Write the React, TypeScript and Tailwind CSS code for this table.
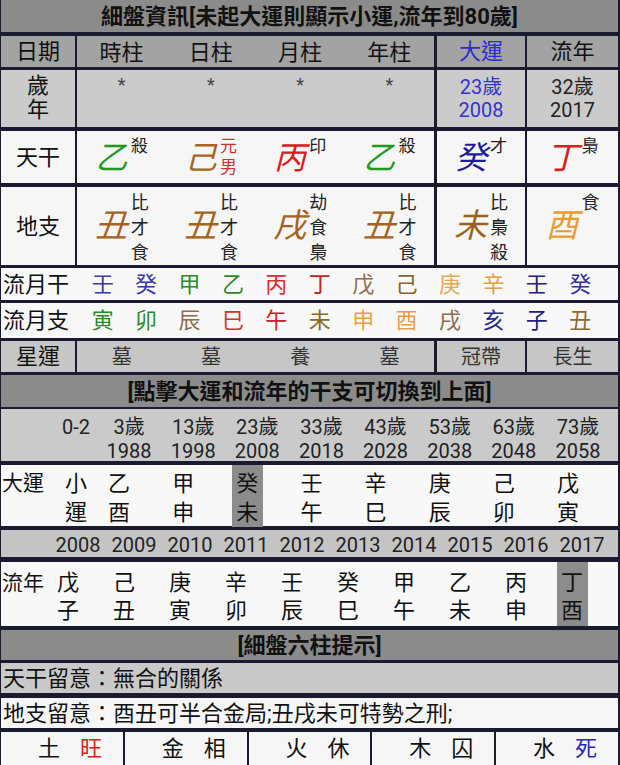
import React from 'react';

// fonts: Roboto for latin/digits, Noto CJK TC for hanzi
const FONT = 'font-[family-name:Roboto,Noto_Sans_CJK_TC,sans-serif]';

interface Pillar {
  c: string;
  cls: string;
  sup: string[];
  supCls?: string;
}

const GAN: Pillar[] = [
  { c: '乙', cls: 'text-[#1f9a1f]', sup: ['殺'] },
  { c: '己', cls: 'text-[#a8651f]', sup: ['元', '男'], supCls: 'text-[#d03030]' },
  { c: '丙', cls: 'text-[#d91c1c]', sup: ['印'] },
  { c: '乙', cls: 'text-[#1f9a1f]', sup: ['殺'] },
  { c: '癸', cls: 'text-[#1c1c9c]', sup: ['才'] },
  { c: '丁', cls: 'text-[#d92020]', sup: ['梟'] },
];

const ZHI: Pillar[] = [
  { c: '丑', cls: 'text-[#a5621c]', sup: ['比', '才', '食'] },
  { c: '丑', cls: 'text-[#a5621c]', sup: ['比', '才', '食'] },
  { c: '戌', cls: 'text-[#a5621c]', sup: ['劫', '食', '梟'] },
  { c: '丑', cls: 'text-[#a5621c]', sup: ['比', '才', '食'] },
  { c: '未', cls: 'text-[#9a6418]', sup: ['比', '梟', '殺'] },
  { c: '酉', cls: 'text-[#eb9b32]', sup: ['食'] },
];

const MONTH_GAN = [
  ['壬', 'text-[#3c3c9c]'],
  ['癸', 'text-[#3434b0]'],
  ['甲', 'text-[#2a8a2a]'],
  ['乙', 'text-[#2a8a2a]'],
  ['丙', 'text-[#d83030]'],
  ['丁', 'text-[#c82020]'],
  ['戊', 'text-[#8a7050]'],
  ['己', 'text-[#8a6030]'],
  ['庚', 'text-[#e8a850]'],
  ['辛', 'text-[#e8a040]'],
  ['壬', 'text-[#22227a]'],
  ['癸', 'text-[#3030a0]'],
];

const MONTH_ZHI = [
  ['寅', 'text-[#2a8a2a]'],
  ['卯', 'text-[#2a8a2a]'],
  ['辰', 'text-[#8a7050]'],
  ['巳', 'text-[#d83030]'],
  ['午', 'text-[#c82020]'],
  ['未', 'text-[#8a6a20]'],
  ['申', 'text-[#e8a040]'],
  ['酉', 'text-[#e8a040]'],
  ['戌', 'text-[#8a7050]'],
  ['亥', 'text-[#2a2a8a]'],
  ['子', 'text-[#22227a]'],
  ['丑', 'text-[#8a6a30]'],
];

const DAYUN = [
  { age: '3歲', year: '1988', gz: ['乙', '酉'] },
  { age: '13歲', year: '1998', gz: ['甲', '申'] },
  { age: '23歲', year: '2008', gz: ['癸', '未'], on: true },
  { age: '33歲', year: '2018', gz: ['壬', '午'] },
  { age: '43歲', year: '2028', gz: ['辛', '巳'] },
  { age: '53歲', year: '2038', gz: ['庚', '辰'] },
  { age: '63歲', year: '2048', gz: ['己', '卯'] },
  { age: '73歲', year: '2058', gz: ['戊', '寅'] },
];

const LIUNIAN = [
  { year: '2008', gz: ['戊', '子'] },
  { year: '2009', gz: ['己', '丑'] },
  { year: '2010', gz: ['庚', '寅'] },
  { year: '2011', gz: ['辛', '卯'] },
  { year: '2012', gz: ['壬', '辰'] },
  { year: '2013', gz: ['癸', '巳'] },
  { year: '2014', gz: ['甲', '午'] },
  { year: '2015', gz: ['乙', '未'] },
  { year: '2016', gz: ['丙', '申'] },
  { year: '2017', gz: ['丁', '酉'], on: true },
];

const ELEMENTS = [
  { a: '土', b: '旺', cls: 'text-[#d82020]' },
  { a: '金', b: '相', cls: 'text-[#111]' },
  { a: '火', b: '休', cls: 'text-[#111]' },
  { a: '木', b: '囚', cls: 'text-[#111]' },
  { a: '水', b: '死', cls: 'text-[#2a2ab0]' },
];

const GanCell: React.FC<{ p: Pillar }> = ({ p }) => (
  <div className="flex h-full justify-center">
    <span className={`mt-[11px] text-[32px] leading-[32px] italic ${p.cls}`}>{p.c}</span>
    <div className={`ml-[3px] flex flex-col pt-[5px] text-[17px] leading-[21px] ${p.supCls ?? 'text-[#222]'}`}>
      {p.sup.map((s, i) => (
        <span key={i}>{s}</span>
      ))}
    </div>
  </div>
);

const ZhiCell: React.FC<{ p: Pillar }> = ({ p }) => (
  <div className="flex h-full justify-center">
    <span className={`mt-[22px] text-[33px] leading-[34px] italic ${p.cls}`}>{p.c}</span>
    <div className="ml-[3px] flex flex-col pt-[3px] text-[18px] leading-[25px] text-[#222]">
      {p.sup.map((s, i) => (
        <span key={i}>{s}</span>
      ))}
    </div>
  </div>
);

interface SixRowProps {
  className: string;
  labelBg: string;
  bg: string;
  label: React.ReactNode;
  pillars: React.ReactNode[];
  dayun: React.ReactNode;
  liunian: React.ReactNode;
}

const SixRow: React.FC<SixRowProps> = ({ className, labelBg, bg, label, pillars, dayun, liunian }) => (
  <div className={`flex ${className}`}>
    <div className={`w-[74px] ${labelBg}`}>{label}</div>
    <div className={`ml-[2px] grid w-[357px] grid-cols-4 ${bg}`}>
      {pillars.map((n, i) => (
        <div key={i} className="h-full">
          {n}
        </div>
      ))}
    </div>
    <div className={`ml-[3px] w-[88px] ${bg}`}>{dayun}</div>
    <div className={`ml-[2px] flex-1 ${bg}`}>{liunian}</div>
  </div>
);

const Title: React.FC<{ className: string; children: React.ReactNode }> = ({ className, children }) => (
  <div className={`flex items-center justify-center bg-[#8b8b8b] text-[22px] font-bold text-[#111] ${className}`}>
    {children}
  </div>
);

const center = 'flex h-full items-center justify-center';

export default function App() {
  return (
    <div className={`${FONT} h-[765px] w-[620px] overflow-hidden bg-[#1b1b2f] pl-[1px] pr-[2px] text-[#111]`}>
      <Title className="h-[32px]">細盤資訊[未起大運則顯示小運,流年到80歲]</Title>

      <SixRow
        className="mt-[4px] h-[31px] text-[22px]"
        labelBg="bg-[#a3a3a3]"
        bg="bg-[#a3a3a3]"
        label={<div className={center}>日期</div>}
        pillars={['時柱', '日柱', '月柱', '年柱'].map((t) => (
          <div className={center}>{t}</div>
        ))}
        dayun={<div className={`${center} text-[#2a2ad0]`}>大運</div>}
        liunian={<div className={center}>流年</div>}
      />

      <SixRow
        className="mt-[3px] h-[57px]"
        labelBg="bg-[#cbcbcb]"
        bg="bg-[#cbcbcb]"
        label={
          <div className="flex flex-col items-center pt-[4px] text-[22px] leading-[24px]">
            <span>歲</span>
            <span>年</span>
          </div>
        }
        pillars={[0, 1, 2, 3].map(() => (
          <div className="pt-[6px] text-center text-[18px] leading-[18px] text-[#444]">*</div>
        ))}
        dayun={
          <div className="flex flex-col items-center pt-[6px] text-[20px] leading-[23px] text-[#3434cc]">
            <span>23歲</span>
            <span>2008</span>
          </div>
        }
        liunian={
          <div className="flex flex-col items-center pt-[6px] text-[20px] leading-[23px] text-[#222]">
            <span>32歲</span>
            <span>2017</span>
          </div>
        }
      />

      <SixRow
        className="mt-[4px] h-[52px]"
        labelBg="bg-[#f6f6f6]"
        bg="bg-[#f6f6f6]"
        label={<div className={`${center} text-[22px]`}>天干</div>}
        pillars={GAN.slice(0, 4).map((p) => (
          <GanCell p={p} />
        ))}
        dayun={<GanCell p={GAN[4]} />}
        liunian={<GanCell p={GAN[5]} />}
      />

      <SixRow
        className="mt-[4px] h-[78px]"
        labelBg="bg-[#f6f6f6]"
        bg="bg-[#f6f6f6]"
        label={<div className={`${center} text-[22px]`}>地支</div>}
        pillars={ZHI.slice(0, 4).map((p) => (
          <ZhiCell p={p} />
        ))}
        dayun={<ZhiCell p={ZHI[4]} />}
        liunian={<ZhiCell p={ZHI[5]} />}
      />

      {/* 流月 rows */}
      <div className="mt-[3px] flex h-[32px] items-center bg-[#f8f8f8] text-[22px]">
        <div className="w-[80px] pl-[2px]">流月干</div>
        <div className="grid flex-1 grid-cols-12 pr-[16px]">
          {MONTH_GAN.map(([c, cls], i) => (
            <span key={i} className={`text-center ${cls}`}>
              {c}
            </span>
          ))}
        </div>
      </div>
      <div className="mt-[3px] flex h-[35px] items-center bg-[#f8f8f8] text-[22px]">
        <div className="w-[80px] pl-[2px]">流月支</div>
        <div className="grid flex-1 grid-cols-12 pr-[16px]">
          {MONTH_ZHI.map(([c, cls], i) => (
            <span key={i} className={`text-center ${cls}`}>
              {c}
            </span>
          ))}
        </div>
      </div>

      <SixRow
        className="mt-[3px] h-[31px] text-[20px] text-[#333]"
        labelBg="bg-[#c6c6c6]"
        bg="bg-[#c6c6c6]"
        label={<div className={`${center} text-[22px] text-[#111]`}>星運</div>}
        pillars={['墓', '墓', '養', '墓'].map((t) => (
          <div className={center}>{t}</div>
        ))}
        dayun={<div className={center}>冠帶</div>}
        liunian={<div className={center}>長生</div>}
      />

      <Title className="mt-[3px] h-[32px]">[點擊大運和流年的干支可切換到上面]</Title>

      {/* 大運 */}
      <div className="mt-[2px] grid h-[52px] grid-cols-[54px_42px_repeat(8,1fr)] bg-[#cacaca] pr-[8px] pt-[6px] text-[20px] leading-[24px] text-[#222]">
        <div />
        <div className="text-center">0-2</div>
        {DAYUN.map((d) => (
          <div key={d.year} className="flex flex-col items-center">
            <span>{d.age}</span>
            <span>{d.year}</span>
          </div>
        ))}
      </div>
      <div className="mt-[4px] grid h-[61px] grid-cols-[54px_42px_repeat(8,1fr)] bg-[#f8f8f8] pr-[8px] text-[22px] leading-[29px]">
        <div className="pl-[1px] pt-[4px] text-[21px]">大運</div>
        <div className="flex justify-center">
          <div className="flex w-[31px] flex-col items-center pt-[4px]">
            <span>小</span>
            <span>運</span>
          </div>
        </div>
        {DAYUN.map((d) => (
          <div key={d.year} className="flex justify-center pr-[20px]">
            <div className={`flex w-[31px] flex-col items-center pt-[4px] ${d.on ? 'bg-[#8c8c8c]' : ''}`}>
              <span>{d.gz[0]}</span>
              <span>{d.gz[1]}</span>
            </div>
          </div>
        ))}
      </div>

      {/* 流年 */}
      <div className="mt-[4px] grid h-[27px] grid-cols-10 items-center bg-[#c4c4c4] pl-[49px] pr-[8px] text-[20px] text-[#222]">
        {LIUNIAN.map((y) => (
          <span key={y.year} className="text-center">
            {y.year}
          </span>
        ))}
      </div>
      <div className="mt-[5px] flex h-[64px] bg-[#f8f8f8] text-[22px] leading-[28px]">
        <div className="w-[49px] pl-[1px] pt-[7px] text-[21px]">流年</div>
        <div className="grid flex-1 grid-cols-10 pr-[8px]">
          {LIUNIAN.map((y) => (
            <div key={y.year} className="flex justify-center pr-[20px]">
              <div className={`flex w-[31px] flex-col items-center pt-[7px] ${y.on ? 'bg-[#8c8c8c]' : ''}`}>
                <span>{y.gz[0]}</span>
                <span>{y.gz[1]}</span>
              </div>
            </div>
          ))}
        </div>
      </div>

      <Title className="mt-[4px] h-[30px]">[細盤六柱提示]</Title>

      <div className="mt-[3px] flex h-[30px] items-center bg-[#c9c9c9] pl-[2px] text-[22px]">天干留意：無合的關係</div>
      <div className="mt-[5px] flex h-[30px] items-center bg-[#f6f6f6] pl-[2px] text-[22px]">
        地支留意：酉丑可半合金局;丑戌未可特勢之刑;
      </div>

      <div className="mt-[4px] grid h-[31px] grid-cols-5 gap-[2px] text-[22px]">
        {ELEMENTS.map((e) => (
          <div key={e.a} className="flex items-center justify-center gap-[20px] bg-[#f6f6f6] pl-[16px]">
            <span>{e.a}</span>
            <span className={e.cls}>{e.b}</span>
          </div>
        ))}
      </div>
    </div>
  );
}
